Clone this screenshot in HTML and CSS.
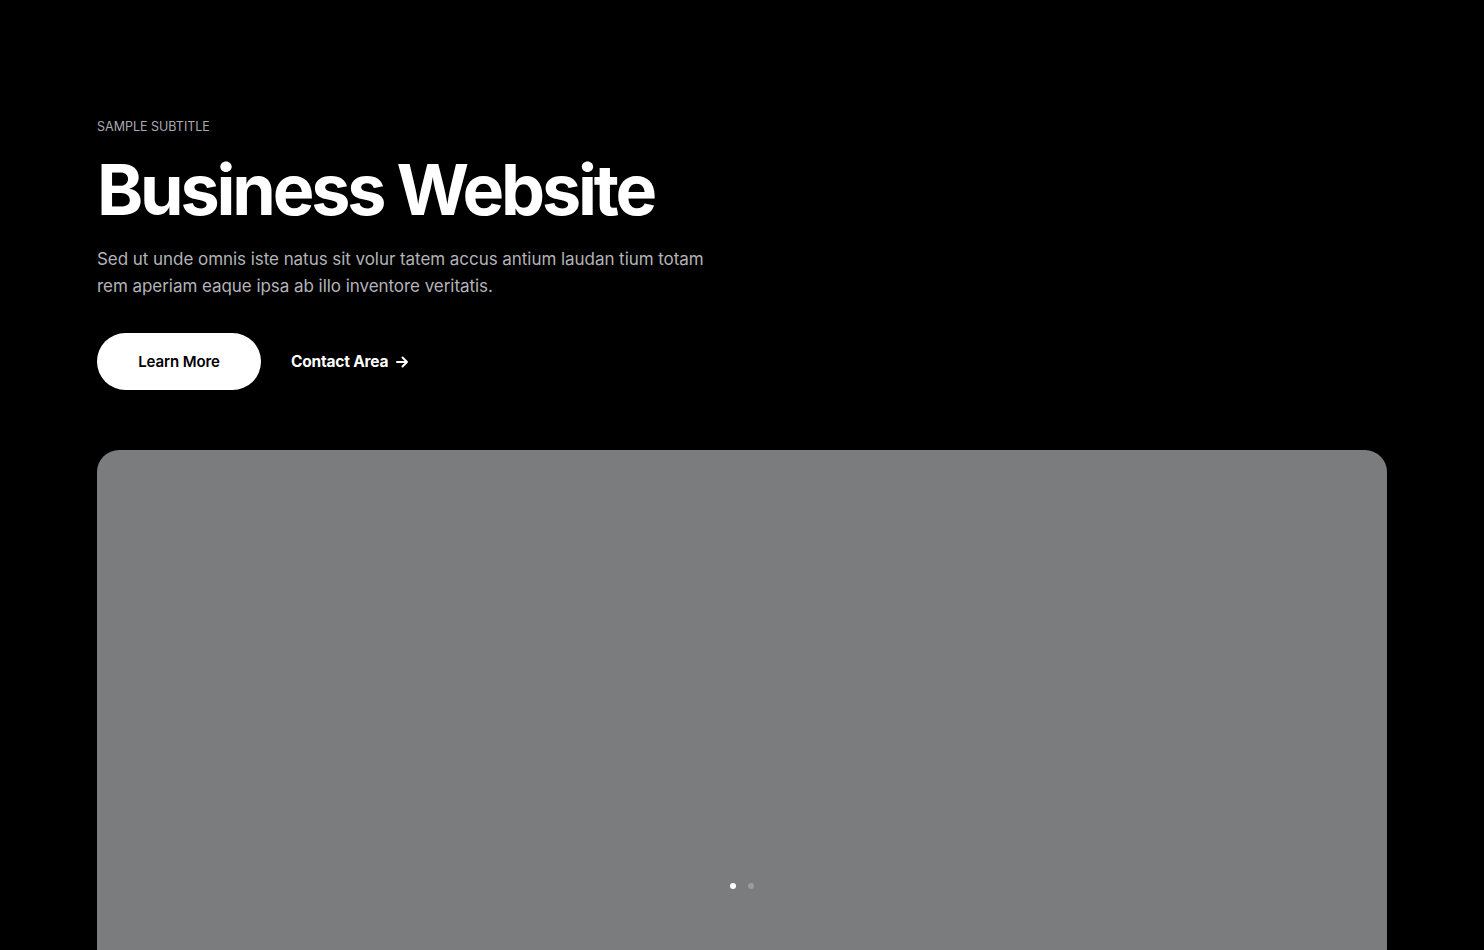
FILE: index.html
```html
<!DOCTYPE html>
<html lang="en">
<head>
<meta charset="utf-8">
<title>Business Website</title>
<link rel="stylesheet" href="styles.css">
</head>
<body>
<section class="hero">
  <div class="container">
    <p class="subtitle">SAMPLE SUBTITLE</p>
    <h1 class="title">Business Website</h1>
    <p class="lead">Sed ut unde omnis iste natus sit volur tatem accus antium laudan tium totam rem aperiam eaque ipsa ab illo inventore veritatis.</p>
    <div class="actions">
      <a class="btn-primary" href="#">Learn More</a>
      <a class="btn-link" href="#">Contact Area
        <svg class="arrow" width="14" height="14" viewBox="0 0 14 14" fill="none" stroke="currentColor" stroke-width="2" stroke-linecap="round" stroke-linejoin="round"><path d="M2 7h10M7.5 2.5L12 7l-4.5 4.5"/></svg>
      </a>
    </div>
    <div class="media">
      <div class="dots">
        <span class="dot active"></span>
        <span class="dot"></span>
      </div>
    </div>
  </div>
</section>
</body>
</html>
```
FILE: styles.css
```css
* { box-sizing: border-box; }
html, body { margin: 0; padding: 0; }
body {
  background: #000;
  font-family: Inter, "Noto Sans", "Liberation Sans", sans-serif;
  color: #fff;
  overflow: hidden;
  height: 950px;
}
.container {
  width: 1290px;
  margin: 0 0 0 97px;
  padding-top: 120px;
}
.subtitle {
  margin: 0;
  font-size: 12.5px;
  line-height: 14px;
  color: #a8aab0;
  letter-spacing: 0;
}
.title {
  margin: 14px 0 0;
  font-size: 70px;
  line-height: 84px;
  font-weight: 700;
  letter-spacing: -3.2px;
  color: #fff;
}
.lead {
  margin: 14px 0 0;
  width: 625px;
  font-size: 17px;
  line-height: 27px;
  color: #b3b3b8;
  letter-spacing: -0.05px;
}
.actions {
  display: flex;
  align-items: center;
  gap: 30px;
  margin-top: 33px;
}
.btn-primary {
  display: flex;
  align-items: center;
  justify-content: center;
  width: 164px;
  height: 57px;
  border-radius: 29px;
  background: #fff;
  color: #000;
  font-size: 15px;
  font-weight: 600;
  text-decoration: none;
  letter-spacing: -0.1px;
}
.btn-link {
  display: flex;
  align-items: center;
  gap: 7px;
  color: #fff;
  font-size: 15.5px;
  font-weight: 700;
  text-decoration: none;
  letter-spacing: -0.2px;
}
.arrow { display: block; }
.media {
  margin-top: 60px;
  height: 520px;
  background: #7b7c7d;
  border-radius: 22px 22px 0 0;
  display: flex;
  align-items: flex-end;
  justify-content: center;
  padding-bottom: 81px;
}
.dots {
  display: flex;
  gap: 12px;
  align-items: center;
}
.dot {
  width: 6px;
  height: 6px;
  border-radius: 50%;
  background: #9a9b9c;
}
.dot.active { background: #fff; }
```
